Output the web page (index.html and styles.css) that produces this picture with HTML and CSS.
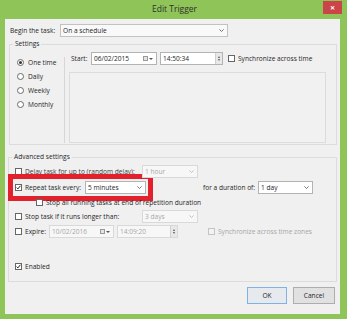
FILE: index.html
```html
<!DOCTYPE html>
<html lang="en">
<head>
    <meta charset="UTF-8">
    <title>Edit Trigger</title>
    <link rel="stylesheet" href="styles.css">
</head>
<body>
    <div class="window">
        <div class="titlebar">
            <span class="title">Edit Trigger</span>
            <span class="close">&#x2715;</span>
        </div>

        <div class="panel">
            <div class="begin-row">
                <span class="begin-label">Begin the task:</span>
                <div class="combo combo-begin">On a schedule
                    <svg class="chev" width="5" height="3" viewBox="0 0 5 3"><path d="M0.4 0.4 L2.5 2.5 L4.6 0.4"/></svg>
                </div>
            </div>

            <fieldset class="group group-settings">
                <legend>Settings</legend>
                <div class="settings-body">
                    <div class="radios">
                        <div class="radio-row"><span class="radio checked"></span>One time</div>
                        <div class="radio-row"><span class="radio"></span>Daily</div>
                        <div class="radio-row"><span class="radio"></span>Weekly</div>
                        <div class="radio-row"><span class="radio"></span>Monthly</div>
                    </div>
                    <div class="divider"></div>
                    <div class="schedule">
                        <div class="start-row">
                            <span class="start-label">Start:</span>
                            <div class="field date-field">06/02/2015
                                <span class="cal"></span>
                                <svg class="tri" width="4" height="2" viewBox="0 0 4 2"><path d="M0 0 L4 0 L2 2 Z"/></svg>
                            </div>
                            <div class="field time-field">14:50:34
                                <span class="spin"><i class="up"></i><i class="down"></i></span>
                            </div>
                            <span class="check"></span>
                            <span class="check-text">Synchronize across time</span>
                        </div>
                        <div class="recur-box"></div>
                    </div>
                </div>
            </fieldset>

            <fieldset class="group group-advanced">
                <legend>Advanced settings</legend>
                <div class="adv-body">
                    <div class="row row-delay">
                        <span class="check"></span>
                        <span class="row-label label-long muted-dark">Delay task for up to (random delay):</span>
                        <div class="combo combo-small disabled">1 hour
                            <svg class="chev" width="5" height="3" viewBox="0 0 5 3"><path d="M0.4 0.4 L2.5 2.5 L4.6 0.4"/></svg>
                        </div>
                    </div>

                    <div class="row row-repeat">
                        <div class="highlight">
                            <span class="check checked">
                                <svg width="5" height="5" viewBox="0 0 5 5"><path d="M0.6 2.6 L1.9 3.9 L4.4 0.8"/></svg>
                            </span>
                            <span class="row-label label-repeat">Repeat task every:</span>
                            <div class="combo combo-repeat">5 minutes
                                <svg class="chev" width="5" height="3" viewBox="0 0 5 3"><path d="M0.4 0.4 L2.5 2.5 L4.6 0.4"/></svg>
                            </div>
                        </div>
                        <span class="duration-label">for a duration of:</span>
                        <div class="combo combo-duration">1 day
                            <svg class="chev" width="5" height="3" viewBox="0 0 5 3"><path d="M0.4 0.4 L2.5 2.5 L4.6 0.4"/></svg>
                        </div>
                    </div>

                    <div class="row row-stopall">
                        <span class="check"></span>
                        <span class="row-label">Stop all running tasks at end of repetition duration</span>
                    </div>

                    <div class="row row-stopif">
                        <span class="check"></span>
                        <span class="row-label label-long">Stop task if it runs longer than:</span>
                        <div class="combo combo-small disabled">3 days
                            <svg class="chev" width="5" height="3" viewBox="0 0 5 3"><path d="M0.4 0.4 L2.5 2.5 L4.6 0.4"/></svg>
                        </div>
                    </div>

                    <div class="row row-expire">
                        <span class="check"></span>
                        <span class="row-label label-expire">Expire:</span>
                        <div class="field date-field disabled">10/02/2016
                            <span class="cal"></span>
                            <svg class="tri" width="4" height="2" viewBox="0 0 4 2"><path d="M0 0 L4 0 L2 2 Z"/></svg>
                        </div>
                        <div class="field time-field disabled">14:09:20
                            <span class="spin"><i class="up"></i><i class="down"></i></span>
                        </div>
                        <span class="check check-disabled"></span>
                        <span class="check-text muted">Synchronize across time zones</span>
                    </div>

                    <div class="row row-enabled">
                        <span class="check checked">
                            <svg width="5" height="5" viewBox="0 0 5 5"><path d="M0.6 2.6 L1.9 3.9 L4.4 0.8"/></svg>
                        </span>
                        <span class="row-label">Enabled</span>
                    </div>
                </div>
            </fieldset>

            <div class="buttons">
                <div class="btn btn-ok">OK</div>
                <div class="btn">Cancel</div>
            </div>
        </div>
    </div>
</body>
</html>
```

FILE: styles.css
```css
* {
    box-sizing: border-box;
}

body {
    margin: 0;
    background-color: #8fc458;
    font-family: "Open Sans", "Noto Sans", sans-serif;
    font-size: 6.6px;
    color: #262626;
}

.window {
    width: 347px;
    height: 319px;
    padding: 0 7px 5px 5px;
    display: flex;
    flex-direction: column;
}

.titlebar {
    height: 19px;
    position: relative;
    display: flex;
    align-items: center;
    justify-content: center;
}

.title {
    font-size: 8.5px;
    color: #2f2f2f;
    margin-left: 4px;
    margin-top: -2px;
}

.close {
    position: absolute;
    right: -2px;
    top: 1px;
    width: 19px;
    height: 13px;
    background-color: #cb4448;
    color: #fff;
    font-size: 6px;
    font-weight: bold;
    display: flex;
    align-items: center;
    justify-content: center;
}

.panel {
    flex: 1;
    background-color: #f0f0f0;
    display: flex;
    flex-direction: column;
}

/* controls */

.combo,
.field {
    position: relative;
    height: 13px;
    border: 1px solid #b3b3b3;
    background-color: #fff;
    padding-left: 2px;
    display: flex;
    align-items: center;
    white-space: nowrap;
}

.combo .chev {
    position: absolute;
    right: 3px;
    top: 4px;
}

.chev path {
    fill: none;
    stroke: #555;
    stroke-width: 0.8;
}

.disabled {
    border-color: #d9d9d9;
    background-color: #f7f7f7;
    color: #a8a8a8;
}

.disabled .chev path {
    stroke: #b5b5b5;
}

.check {
    width: 7px;
    height: 7px;
    border: 1px solid #666;
    background-color: #fff;
    flex-shrink: 0;
    display: flex;
    align-items: center;
    justify-content: center;
}

.check svg path {
    fill: none;
    stroke: #222;
    stroke-width: 1;
}

.check-disabled {
    border-color: #c4c4c4;
    background-color: #f3f3f3;
}

.check-text {
    margin-left: 3px;
    white-space: nowrap;
}

.muted {
    color: #a6a6a6;
}

.radio {
    width: 7px;
    height: 7px;
    border: 1px solid #6a6a6a;
    border-radius: 50%;
    background-color: #fff;
    margin-right: 4px;
    position: relative;
}

.radio.checked::after {
    content: "";
    position: absolute;
    left: 1px;
    top: 1px;
    width: 3px;
    height: 3px;
    border-radius: 50%;
    background-color: #333;
}

.cal {
    position: absolute;
    right: 8px;
    top: 3px;
    width: 5px;
    height: 5px;
    border: 1px solid #9a9a9a;
    background-color: #e4e4e4;
}

.tri {
    position: absolute;
    right: 3px;
    top: 5px;
}

.tri path {
    fill: #555;
}

.spin {
    position: absolute;
    right: 0;
    top: 0;
    bottom: 0;
    width: 7px;
    border-left: 1px solid #d0d0d0;
    background-color: #e8e8e8;
    display: flex;
    flex-direction: column;
    align-items: center;
    justify-content: center;
    gap: 1px;
}

.spin i {
    width: 0;
    height: 0;
    border-left: 1.5px solid transparent;
    border-right: 1.5px solid transparent;
}

.spin .up {
    border-bottom: 2px solid #555;
}

.spin .down {
    border-top: 2px solid #555;
}

/* begin row */

.begin-row {
    display: flex;
    align-items: center;
    height: 13px;
    margin-top: 5px;
    padding-left: 5px;
}

.begin-label {
    width: 50px;
}

.combo-begin {
    width: 168px;
    background-color: #f9f9f9;
    border-color: #c2c2c2;
}

/* group boxes */

.group {
    border: 1px solid #dcdcdc;
    padding: 0;
    min-width: 0;
}

.group legend {
    line-height: 10px;
    padding: 0 2px;
    margin-left: 3px;
}

.group-settings {
    margin: 2px 3px 0 4px;
    padding-bottom: 1px;
}

.settings-body {
    display: flex;
    padding-top: 3px;
}

.radios {
    width: 54px;
    padding: 3px 0 0 7px;
}

.radio-row {
    height: 14px;
    display: flex;
    align-items: center;
}

.divider {
    width: 1px;
    background-color: #d6d6d6;
    margin-top: 5px;
}

.schedule {
    flex: 1;
    margin-left: 4px;
    padding-right: 10px;
    display: flex;
    flex-direction: column;
}

.start-row {
    display: flex;
    align-items: center;
    height: 13px;
    padding-left: 2px;
}

.start-label {
    width: 20px;
}

.date-field {
    width: 66px;
}

.time-field {
    width: 63px;
    margin-left: 3px;
    margin-right: 5px;
}

.recur-box {
    margin-top: 7px;
    height: 71px;
    border: 1px solid #dcdcdc;
    background-color: #f1f1f1;
}

.group-advanced {
    margin: 7px 3px 0 3px;
}

.adv-body {
    padding: 3px 0 8px 6px;
}

.row {
    display: flex;
    align-items: center;
    height: 13px;
}

.row-label {
    margin-left: 3px;
    white-space: nowrap;
}

.muted-dark {
    color: #3a3a3a;
}

.label-long {
    width: 117px;
}

.combo-small {
    width: 56px;
}

.row-repeat {
    height: 17px;
    margin-top: 1px;
}

.highlight {
    display: flex;
    align-items: center;
    height: 17px;
    margin-left: -2px;
    padding: 0 2px;
    outline: 5px solid #e3212d;
}

.label-repeat {
    width: 60px;
}

.combo-repeat {
    width: 61px;
}

.duration-label {
    margin-left: 55px;
    width: 55px;
    white-space: nowrap;
}

.combo-duration {
    width: 55px;
}

.row-stopall {
    height: 12px;
    padding-left: 21px;
}

.row-stopif {
    margin-top: 2px;
}

.row-expire {
    margin-top: 2px;
}

.label-expire {
    width: 24px;
}

.row-expire .date-field {
    width: 65px;
}

.row-expire .time-field {
    width: 61px;
    margin-left: 3px;
    margin-right: 30px;
}

.row-enabled {
    margin-top: 22px;
}

/* buttons */

.buttons {
    display: flex;
    justify-content: flex-end;
    gap: 6px;
    margin-top: 5px;
    padding-right: 5px;
}

.btn {
    width: 42px;
    height: 17px;
    border: 1px solid #adadad;
    background-color: #e1e1e1;
    display: flex;
    align-items: center;
    justify-content: center;
}

.btn-ok {
    width: 40px;
    border-color: #7fb3e3;
    background-color: #e6eaef;
}
```
